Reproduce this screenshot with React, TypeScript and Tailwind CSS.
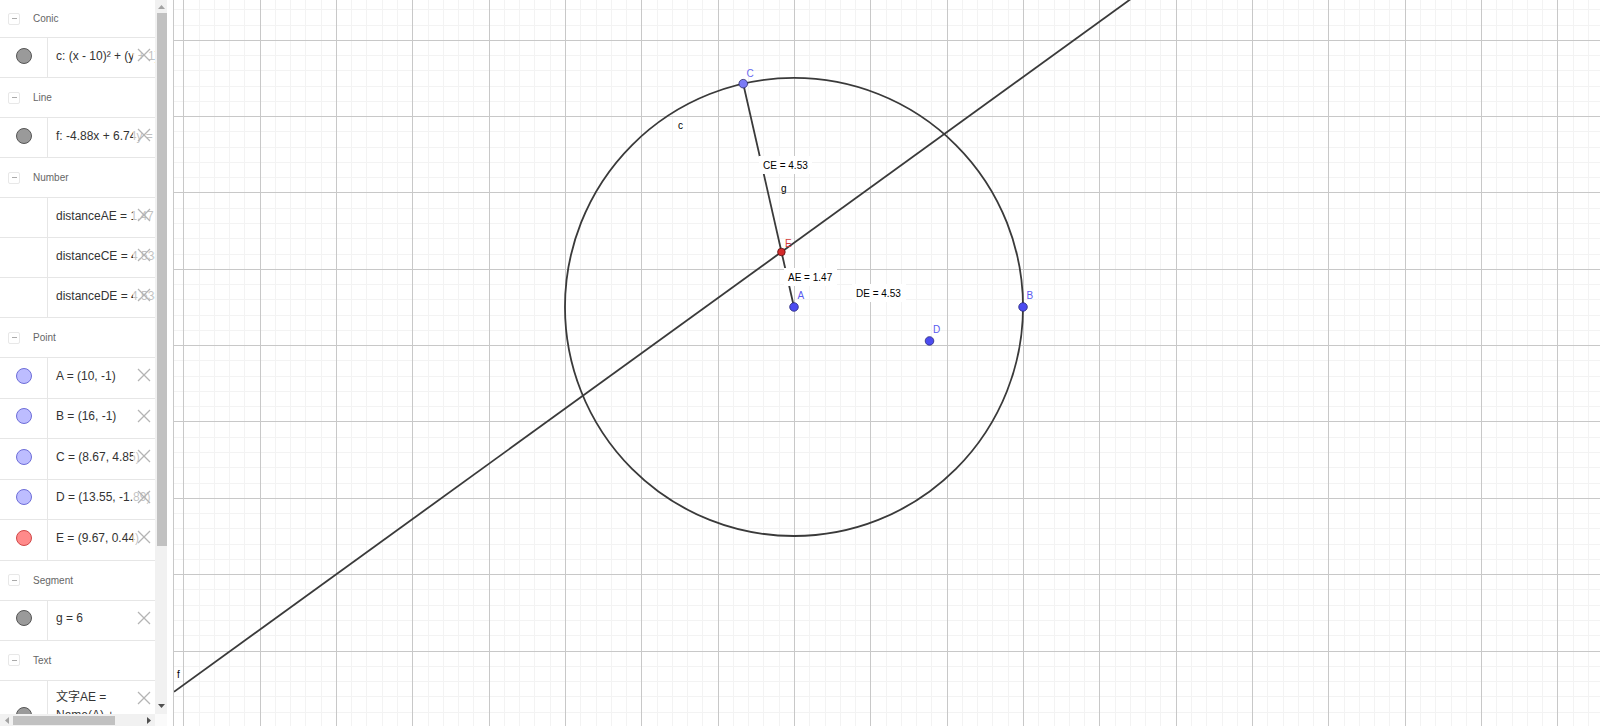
import React from "react";

const X0 = 412.3;
const Y0 = 268.8;
const S = 38.17;
const tx = (x: number) => X0 + x * S;
const ty = (y: number) => Y0 - y * S;

type Item = {
  kind: "header" | "item";
  label: string;
  dot?: "gray" | "point" | "red" | "none";
  first?: boolean;
  tall?: boolean;
};

const rows: Item[] = [
  { kind: "header", label: "Conic", first: true },
  { kind: "item", label: "c: (x - 10)² + (y + 1)² = 36", dot: "gray" },
  { kind: "header", label: "Line" },
  { kind: "item", label: "f: -4.88x + 6.74y = -44.22", dot: "gray" },
  { kind: "header", label: "Number" },
  { kind: "item", label: "distanceAE = 1.47", dot: "none" },
  { kind: "item", label: "distanceCE = 4.53", dot: "none" },
  { kind: "item", label: "distanceDE = 4.53", dot: "none" },
  { kind: "header", label: "Point" },
  { kind: "item", label: "A = (10, -1)", dot: "point", tall: true },
  { kind: "item", label: "B = (16, -1)", dot: "point", tall: true },
  { kind: "item", label: "C = (8.67, 4.85)", dot: "point", tall: true },
  { kind: "item", label: "D = (13.55, -1.89)", dot: "point", tall: true },
  { kind: "item", label: "E = (9.67, 0.44)", dot: "red", tall: true },
  { kind: "header", label: "Segment" },
  { kind: "item", label: "g = 6", dot: "gray" },
  { kind: "header", label: "Text" },
];

function CloseX() {
  return (
    <svg width="14" height="14" viewBox="0 0 14 14">
      <line x1="1" y1="1" x2="13" y2="13" stroke="#b4b4b4" strokeWidth="1.2" />
      <line x1="13" y1="1" x2="1" y2="13" stroke="#b4b4b4" strokeWidth="1.2" />
    </svg>
  );
}

function Dot({ dot }: { dot?: Item["dot"] }) {
  if (dot === "gray")
    return <div className="w-4 h-4 rounded-full bg-[#9a9a9a] border border-[#555]" />;
  if (dot === "point")
    return <div className="w-4 h-4 rounded-full bg-[#bdbdff] border border-[#6d6dd8]" />;
  if (dot === "red")
    return <div className="w-4 h-4 rounded-full bg-[#ff8a8a] border border-[#d04848]" />;
  return null;
}

function Row({ r }: { r: Item }) {
  if (r.kind === "header") {
    return (
      <div
        className={
          r.first
            ? "h-[38px] flex items-center border-b border-[#e6e6e6] shrink-0"
            : "h-10 flex items-center border-b border-[#e6e6e6] shrink-0"
        }
      >
        <div className="ml-2 w-3 h-3 border border-[#e8e8e8] rounded-[2px] flex items-center justify-center">
          <div className="w-[5px] h-px bg-[#aaa]" />
        </div>
        <span className="ml-[13px] text-[10px] text-[#666]">{r.label}</span>
      </div>
    );
  }
  return (
    <div
      className={
        r.tall
          ? "relative h-[40.5px] flex border-b border-[#e6e6e6] shrink-0"
          : "relative h-10 flex border-b border-[#e6e6e6] shrink-0"
      }
    >
      <div className="w-12 border-r border-[#e6e6e6] flex items-center justify-center pb-[4px] shrink-0">
        <Dot dot={r.dot} />
      </div>
      <div className="pl-2 pb-[4px] flex items-center whitespace-nowrap text-[12px] text-[#333]">
        {r.label}
      </div>
      <div className="absolute left-[133px] top-[7px] w-[21px] h-[20px] bg-white/70 flex items-center justify-center">
        <CloseX />
      </div>
    </div>
  );
}

function Panel() {
  return (
    <div className="w-[174px] h-[726px] shrink-0 border-r border-[#c8c8c8] flex flex-col bg-white">
      <div className="flex h-[714px]">
        <div className="w-[155px] overflow-hidden flex flex-col">
          {rows.map((r, i) => (
            <Row key={i} r={r} />
          ))}
          <div className="relative h-[68px] flex shrink-0">
            <div className="w-12 border-r border-[#e6e6e6] flex items-center justify-center shrink-0">
              <div className="w-4 h-4 rounded-full bg-[#9a9a9a] border border-[#555]" />
            </div>
            <div
              className="pl-2 pt-[7px] text-[12px] leading-[18px] text-[#333] whitespace-nowrap"
              style={{ fontFamily: '"Liberation Sans", "Noto Sans CJK SC", sans-serif' }}
            >
              <div>文字AE =</div>
              <div>Name(A) +</div>
              <div>"E = " +</div>
            </div>
            <div className="absolute left-[133px] top-[7px] w-[21px] h-[20px] bg-white/70 flex items-center justify-center">
              <CloseX />
            </div>
          </div>
        </div>
        <div className="w-3 bg-[#f1f1f1] flex flex-col items-center">
          <div className="h-[13px] flex items-center justify-center">
            <svg width="7" height="4" viewBox="0 0 7 4">
              <polygon points="3.5,0 7,4 0,4" fill="#a3a3a3" />
            </svg>
          </div>
          <div className="w-[10px] ml-[2px] h-[533px] bg-[#c1c1c1]" />
          <div className="flex-1" />
          <div className="h-[16px] flex items-center justify-center">
            <svg width="7" height="4" viewBox="0 0 7 4">
              <polygon points="0,0 7,0 3.5,4" fill="#505050" />
            </svg>
          </div>
        </div>
      </div>
      <div className="flex h-[12px]">
        <div className="w-[155px] bg-[#f1f1f1] flex items-center">
          <div className="w-[13px] flex items-center justify-center">
            <svg width="4" height="7" viewBox="0 0 4 7">
              <polygon points="4,0 4,7 0,3.5" fill="#a3a3a3" />
            </svg>
          </div>
          <div className="w-[102px] h-[9px] bg-[#c1c1c1]" />
          <div className="flex-1" />
          <div className="w-[13px] flex items-center justify-center">
            <svg width="4" height="7" viewBox="0 0 4 7">
              <polygon points="0,0 4,3.5 0,7" fill="#505050" />
            </svg>
          </div>
        </div>
        <div className="w-3 bg-[#fafafa]" />
      </div>
    </div>
  );
}

function Canvas() {
  const step = S * 0.4;
  const vlines: { x: number; major: boolean }[] = [];
  for (let k = Math.ceil((174 - X0) / step); X0 + k * step <= 1600; k++) {
    vlines.push({ x: Math.round(X0 + k * step) + 0.5, major: k % 5 === 0 });
  }
  const hlines: { y: number; major: boolean }[] = [];
  for (let k = Math.ceil((0 - Y0) / step); Y0 + k * step <= 726; k++) {
    hlines.push({ y: Math.round(Y0 + k * step) + 0.5, major: k % 5 === 0 });
  }
  const A = { x: tx(10), y: ty(-1) };
  const B = { x: tx(16), y: ty(-1) };
  const C = { x: tx(8.67), y: ty(4.85) };
  const D = { x: tx(13.55), y: ty(-1.89) };
  const E = { x: tx(9.67), y: ty(0.44) };
  const fy = (sx: number) => {
    const mx = (sx - X0) / S;
    const my = (-44.22 + 4.88 * mx) / 6.74;
    return ty(my);
  };
  const font = '"Liberation Sans", Arial, sans-serif';
  const label = (x: number, y: number, w: number, t: string) => (
    <g>
      <rect x={x - 4} y={y - 9} width={w + 8} height={18} fill="#ffffff" />
      <text x={x} y={y + 3.5} fontSize="10" fill="#000" fontFamily={font}>
        {t}
      </text>
    </g>
  );
  return (
    <div className="flex-1 h-[726px] overflow-hidden bg-white">
      <svg width="1426" height="726" viewBox="174 0 1426 726" className="block">
        <g shapeRendering="crispEdges">
          {vlines
            .filter((l) => !l.major)
            .map((l, i) => (
              <line key={"vm" + i} x1={l.x} y1={0} x2={l.x} y2={726} stroke="#f3f3f3" strokeWidth="1" />
            ))}
          {hlines
            .filter((l) => !l.major)
            .map((l, i) => (
              <line key={"hm" + i} x1={174} y1={l.y} x2={1600} y2={l.y} stroke="#f3f3f3" strokeWidth="1" />
            ))}
          {vlines
            .filter((l) => l.major)
            .map((l, i) => (
              <line key={"vM" + i} x1={l.x} y1={0} x2={l.x} y2={726} stroke="#c8c8c8" strokeWidth="1" />
            ))}
          {hlines
            .filter((l) => l.major)
            .map((l, i) => (
              <line key={"hM" + i} x1={174} y1={l.y} x2={1600} y2={l.y} stroke="#c8c8c8" strokeWidth="1" />
            ))}
        </g>
        <circle cx={A.x} cy={A.y} r={6 * S} fill="none" stroke="#3a3a3a" strokeWidth="1.8" />
        <line x1={174} y1={fy(174)} x2={1140} y2={fy(1140)} stroke="#3a3a3a" strokeWidth="1.8" />
        <line x1={C.x} y1={C.y} x2={A.x} y2={A.y} stroke="#3a3a3a" strokeWidth="1.8" />
        {label(763, 165, 45, "CE = 4.53")}
        {label(788, 277, 45, "AE = 1.47")}
        {label(856, 293, 46, "DE = 4.53")}
        <text x={678} y={129} fontSize="10" fontFamily={font} fill="#000">c</text>
        <text x={781} y={192} fontSize="10" fontFamily={font} fill="#000">g</text>
        <text x={177} y={678} fontSize="10" fontFamily={font} fill="#000">f</text>
        <circle cx={A.x} cy={A.y} r="4.3" fill="#4b4bf0" stroke="#2a2a7a" strokeWidth="0.8" />
        <circle cx={B.x} cy={B.y} r="4.3" fill="#4b4bf0" stroke="#2a2a7a" strokeWidth="0.8" />
        <circle cx={D.x} cy={D.y} r="4.3" fill="#4b4bf0" stroke="#2a2a7a" strokeWidth="0.8" />
        <circle cx={C.x} cy={C.y} r="4.3" fill="#7b7bf6" stroke="#2a2a6a" strokeWidth="0.8" />
        <circle cx={E.x} cy={E.y} r="3.8" fill="#d42a2a" stroke="#5a1010" strokeWidth="0.8" />
        <text x={746.5} y={77} fontSize="10" fontFamily={font} fill="#6a6af0">C</text>
        <text x={785} y={246.5} fontSize="10" fontFamily={font} fill="#d43a3a">E</text>
        <text x={797.5} y={299} fontSize="10" fontFamily={font} fill="#5a5af0">A</text>
        <text x={1026.5} y={299} fontSize="10" fontFamily={font} fill="#5a5af0">B</text>
        <text x={933} y={333} fontSize="10" fontFamily={font} fill="#5a5af0">D</text>
      </svg>
    </div>
  );
}

export default function App() {
  return (
    <div
      className="w-[1600px] h-[726px] flex overflow-hidden bg-white"
      style={{ fontFamily: '"Liberation Sans", Arial, "Noto Sans CJK SC", sans-serif' }}
    >
      <Panel />
      <Canvas />
    </div>
  );
}
